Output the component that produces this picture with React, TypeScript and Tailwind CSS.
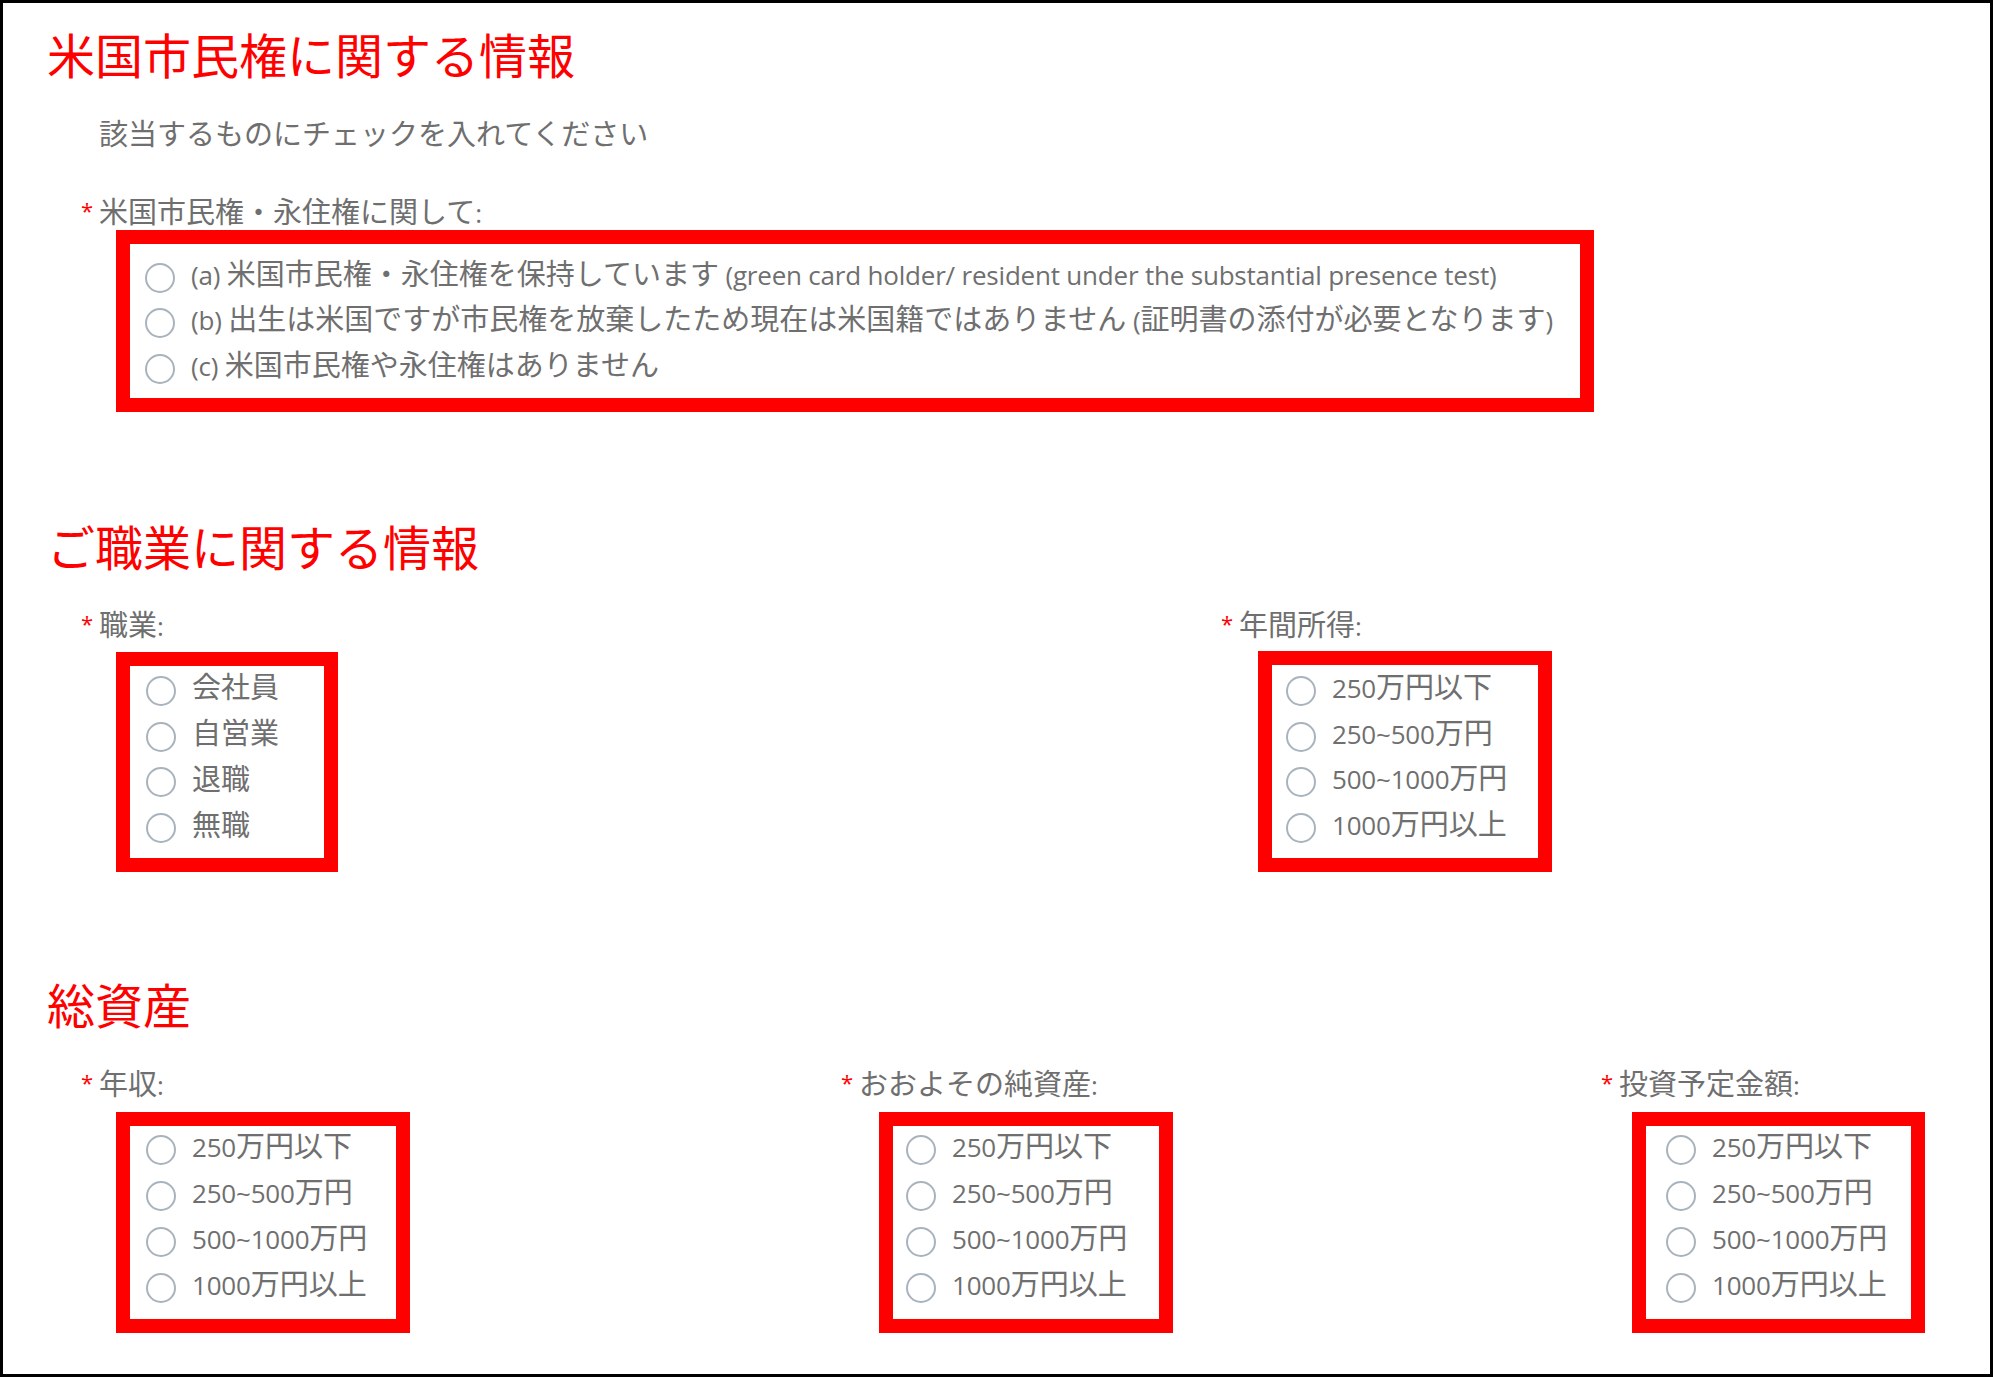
import React from "react";

const INCOME = ["250万円以下", "250~500万円", "500~1000万円", "1000万円以上"];

// Latin runs are set a little smaller than the CJK runs so that their width
// and x-height match the narrow humanist face of the original.
function Mixed({ text }: { text: string }) {
  const parts = text.split(/([\u3000-\u30ff\u4e00-\u9fff\uff00-\uffef]+)/);
  return (
    <>
      {parts.map((p, i) =>
        p === "" ? null : /[\u3000-\u30ff\u4e00-\u9fff\uff00-\uffef]/.test(p) ? (
          <span key={i}>{p}</span>
        ) : (
          <span key={i} className="text-[26px] tracking-[-0.2px]">
            {p}
          </span>
        )
      )}
    </>
  );
}

function Radio({ label, rowClass }: { label: string; rowClass: string }) {
  return (
    <div className={`flex items-center whitespace-nowrap ${rowClass}`}>
      <span className="inline-block w-[30px] h-[30px] shrink-0 rounded-full border-2 border-[#a9b3bd] bg-white" />
      <span className="ml-[16px] pb-[7px] text-[29px] leading-[28px] text-[#6f6f6f]">
        <Mixed text={label} />
      </span>
    </div>
  );
}

function Label({ text }: { text: string }) {
  return (
    <div className="flex h-[28px] items-start whitespace-nowrap">
      <span className="inline-block w-[18px] mt-[1px] text-[22px] leading-[22px] text-[#ff0000]">*</span>
      <span className="text-[29px] leading-[28px] text-[#6f6f6f]">
        <Mixed text={text} />
      </span>
    </div>
  );
}

function Box({
  items,
  boxClass,
  rowClass,
}: {
  items: string[];
  boxClass: string;
  rowClass: string;
}) {
  return (
    <div className={`border-[14px] border-[#ff0000] bg-white ${boxClass}`}>
      {items.map((it) => (
        <Radio key={it} label={it} rowClass={rowClass} />
      ))}
    </div>
  );
}

function Heading({ text, className }: { text: string; className: string }) {
  return (
    <h2
      className={`ml-[44px] h-[48px] text-[48px] leading-[48px] font-normal text-[#ff0000] font-['Noto_Sans_CJK_JP',sans-serif] whitespace-nowrap ${className}`}
    >
      {text}
    </h2>
  );
}

export default function App() {
  return (
    <div className="w-[1993px] h-[1377px] overflow-hidden bg-white border-[3px] border-black font-['Open_Sans','Noto_Sans_CJK_JP',sans-serif] text-[#6f6f6f]">
      {/* Section 1 */}
      <Heading text="米国市民権に関する情報" className="mt-[26px]" />
      <p className="ml-[96px] mt-[43px] h-[28px] text-[29px] leading-[28px] text-[#6f6f6f] whitespace-nowrap">
        該当するものにチェックを入れてください
      </p>
      <div className="pl-[78px] mt-[50px]">
        <Label text="米国市民権・永住権に関して:" />
        <Box
          boxClass="mt-[4px] ml-[35px] w-[1478px] h-[182px] pt-[11px] pl-[15px]"
          rowClass="h-[45.5px]"
          items={[
            "(a) 米国市民権・永住権を保持しています (green card holder/ resident under the substantial presence test)",
            "(b) 出生は米国ですが市民権を放棄したため現在は米国籍ではありません (証明書の添付が必要となります)",
            "(c) 米国市民権や永住権はありません",
          ]}
        />
      </div>

      {/* Section 2 */}
      <Heading text="ご職業に関する情報" className="mt-[109px]" />
      <div className="pl-[78px] mt-[42px] grid grid-cols-[1140px_1fr] items-start">
        <div>
          <Label text="職業:" />
          <Box
            boxClass="mt-[13px] ml-[35px] w-[222px] h-[220px] pt-[2px] pl-[16px]"
            rowClass="h-[45.75px]"
            items={["会社員", "自営業", "退職", "無職"]}
          />
        </div>
        <div>
          <Label text="年間所得:" />
          <Box
            boxClass="mt-[12px] ml-[37px] w-[294px] h-[221px] pt-[3px] pl-[14px]"
            rowClass="h-[45.75px]"
            items={INCOME}
          />
        </div>
      </div>

      {/* Section 3 */}
      <Heading text="総資産" className="mt-[107px]" />
      <div className="pl-[78px] mt-[43px] grid grid-cols-[760px_760px_1fr] items-start">
        <div>
          <Label text="年収:" />
          <Box
            boxClass="mt-[14px] ml-[35px] w-[294px] h-[221px] pt-[1px] pl-[16px]"
            rowClass="h-[46px]"
            items={INCOME}
          />
        </div>
        <div>
          <Label text="おおよその純資産:" />
          <Box
            boxClass="mt-[14px] ml-[38px] w-[294px] h-[221px] pt-[1px] pl-[13px]"
            rowClass="h-[46px]"
            items={INCOME}
          />
        </div>
        <div>
          <Label text="投資予定金額:" />
          <Box
            boxClass="mt-[14px] ml-[31px] w-[293px] h-[221px] pt-[1px] pl-[20px]"
            rowClass="h-[46px]"
            items={INCOME}
          />
        </div>
      </div>
    </div>
  );
}
